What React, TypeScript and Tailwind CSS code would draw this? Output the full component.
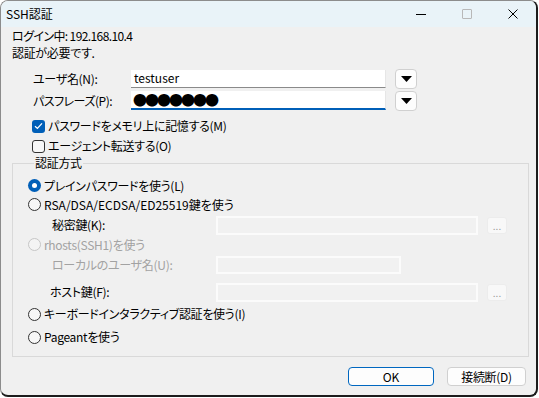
import React from "react";

const font = { fontFamily: '"Noto Sans CJK JP", "Noto Sans", sans-serif' };

function Radio({ checked, disabled }: { checked?: boolean; disabled?: boolean }) {
  if (checked) {
    return (
      <span className="w-[13px] h-[13px] rounded-full bg-[#005fb8] flex items-center justify-center shrink-0">
        <span className="w-[5px] h-[5px] rounded-full bg-white" />
      </span>
    );
  }
  return (
    <span
      className={
        "w-[13px] h-[13px] rounded-full border shrink-0 " +
        (disabled ? "border-[#c6c6c6] bg-[#f4f4f4]" : "border-[#333333] bg-[#f7f7f7]")
      }
    />
  );
}

function Check({ checked }: { checked?: boolean }) {
  if (checked) {
    return (
      <span className="w-[13px] h-[13px] rounded-[3px] bg-[#005fb8] flex items-center justify-center shrink-0">
        <svg width="9" height="8" viewBox="0 0 9 8">
          <path d="M1 4.2 L3.4 6.4 L8 1.4" fill="none" stroke="white" strokeWidth="1.3" />
        </svg>
      </span>
    );
  }
  return <span className="w-[13px] h-[13px] rounded-[3px] border border-[#333333] bg-[#f7f7f7] shrink-0" />;
}

function DropBtn() {
  return (
    <div className="w-[22px] h-[20px] rounded-[4px] border border-[#d0d0d0] bg-[#fdfdfd] flex items-center justify-center">
      <svg width="11" height="6" viewBox="0 0 11 6">
        <path d="M0 0 H11 L5.5 6 Z" fill="#000" />
      </svg>
    </div>
  );
}

function DotsBtn() {
  return (
    <div className="w-[20px] h-[17px] rounded-[3px] border border-[#ececec] bg-[#f8f8f8] flex items-end justify-center text-[10px] leading-[14px] text-[#9a9a9a] tracking-normal">
      ...
    </div>
  );
}

export default function App() {
  return (
    <div className="w-[539px] h-[398px] bg-[#ffffff]" style={font}>
      <div className="w-[538px] h-[397px] rounded-[8px] border border-[#8c8c8c] border-r-[#1c1c1c] border-b-[#1c1c1c] border-r-2 border-b-2 bg-[#f0f0f0] overflow-hidden flex flex-col text-[12px] text-black whitespace-nowrap tracking-[-0.3px] [font-feature-settings:'palt']">
        {/* title bar */}
        <div className="h-[26px] bg-[#e9f3f8] flex items-center shrink-0">
          <span className="ml-[5px] text-[12px] leading-[14px] tracking-normal">SSH認証</span>
          <div className="ml-auto flex items-center h-full">
            <div className="w-[46px] h-full flex items-center justify-center">
              <span className="w-[10px] h-[1px] bg-black" />
            </div>
            <div className="w-[46px] h-full flex items-center justify-center">
              <span className="w-[10px] h-[10px] border border-[#b8b8b8] rounded-[1px]" />
            </div>
            <div className="w-[46px] h-full flex items-center justify-center">
              <svg width="10" height="10" viewBox="0 0 10 10">
                <path d="M0.5 0.5 L9.5 9.5 M9.5 0.5 L0.5 9.5" stroke="#000" strokeWidth="1" />
              </svg>
            </div>
          </div>
        </div>

        {/* body */}
        <div className="flex flex-col pl-[11px] pr-[9px]">
          <div className="h-[17px] leading-[17px] tracking-[-0.6px]">ログイン中: 192.168.10.4</div>
          <div className="h-[17px] leading-[17px]">認証が必要です.</div>

          <div className="flex items-center h-[19px] mt-[8px]">
            <span className="w-[119px] pl-[21px] shrink-0">ユーザ名(N):</span>
            <div className="w-[255px] h-[18px] bg-white border-r border-[#e6e6e6] border-b border-b-[#8a8a8a] flex items-center pl-[3px] text-[12px] tracking-normal">
              testuser
            </div>
            <div className="ml-[9px]">
              <DropBtn />
            </div>
          </div>

          <div className="flex items-center h-[19px] mt-[3px]">
            <span className="w-[119px] pl-[21px] shrink-0 tracking-[-0.5px]">パスフレーズ(P):</span>
            <div className="w-[255px] h-[19px] bg-white border-r border-[#e6e6e6] border-b-2 border-b-[#005fb8] flex items-center pl-[2px] text-[14px] tracking-[-2px]">
              ●●●●●●●
            </div>
            <div className="ml-[9px]">
              <DropBtn />
            </div>
          </div>

          <div className="flex items-center h-[20px] mt-[6px] pl-[20px] gap-[3px]">
            <Check checked />
            <span>パスワードをメモリ上に記憶する(M)</span>
          </div>
          <div className="flex items-center h-[20px] pl-[20px] gap-[3px]">
            <Check />
            <span>エージェント転送する(O)</span>
          </div>

          <fieldset className="border border-[#d9d9d9] w-[517px] h-[201px] pl-[15px] pr-[6px] flex flex-col">
            <legend className="ml-[6px] px-[1px] leading-[14px]">認証方式</legend>
            <div className="flex items-center h-[19px] mt-[6px] gap-[3px]">
              <Radio checked />
              <span>プレインパスワードを使う(L)</span>
            </div>
            <div className="flex items-center h-[19px] gap-[3px] tracking-normal">
              <Radio />
              <span>RSA/DSA/ECDSA/ED25519鍵を使う</span>
            </div>
            <div className="flex items-center h-[20px] mt-[1px]">
              <span className="w-[188px] pl-[24px] shrink-0">秘密鍵(K):</span>
              <div className="w-[262px] h-[19px] border-2 border-[#fbfbfb] bg-[#f1f1f1]" />
              <div className="ml-[9px]">
                <DotsBtn />
              </div>
            </div>
            <div className="flex items-center h-[19px] gap-[3px] text-[#a2a2a2]">
              <Radio disabled />
              <span>rhosts(SSH1)を使う</span>
            </div>
            <div className="flex items-center h-[20px] mt-[1px] text-[#a2a2a2]">
              <span className="w-[188px] pl-[24px] shrink-0">ローカルのユーザ名(U):</span>
              <div className="w-[185px] h-[18px] border-2 border-[#fbfbfb] bg-[#f1f1f1]" />
            </div>
            <div className="flex items-center h-[20px] mt-[7px]">
              <span className="w-[188px] pl-[22px] shrink-0">ホスト鍵(F):</span>
              <div className="w-[262px] h-[19px] border-2 border-[#fbfbfb] bg-[#f1f1f1]" />
              <div className="ml-[9px]">
                <DotsBtn />
              </div>
            </div>
            <div className="flex items-center h-[20px] mt-[2px] gap-[3px]">
              <Radio />
              <span>キーボードインタラクティブ認証を使う(I)</span>
            </div>
            <div className="flex items-center h-[20px] mt-[3px] gap-[3px]">
              <Radio />
              <span>Pageantを使う</span>
            </div>
          </fieldset>

          <div className="flex justify-end mt-[10px] gap-[13px] pr-[1px]">
            <div className="w-[86px] h-[19px] rounded-[4px] border border-[#0067c0] bg-[#fdfdfd] flex items-center justify-center leading-[14px] tracking-normal">
              OK
            </div>
            <div className="w-[79px] h-[19px] rounded-[4px] border border-[#d0d0d0] bg-[#fdfdfd] flex items-center justify-center leading-[14px]">
              接続断(D)
            </div>
          </div>
        </div>
      </div>
    </div>
  );
}
